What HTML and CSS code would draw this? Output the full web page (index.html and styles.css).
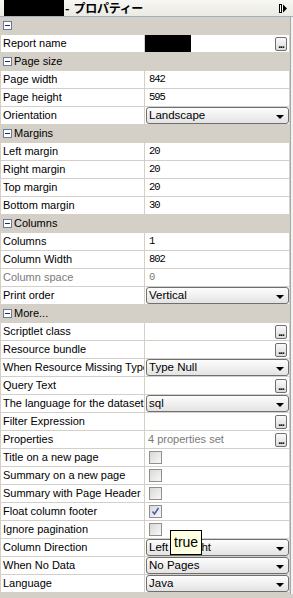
FILE: index.html
```html
<!DOCTYPE html>
<html lang="ja">
<head>
  <meta charset="UTF-8">
  <title>プロパティー</title>
  <link rel="stylesheet" href="styles.css">
</head>
<body>

  <div class="fenetre">

    <!-- barre de titre -->
    <div class="titre">
      <span class="masque"></span>
      <span class="titre-texte">- プロパティー</span>
      <svg class="epingle" width="8" height="9" viewBox="0 0 8 9">
        <rect x="0.5" y="0.5" width="2" height="8" fill="none" stroke="#000"/>
        <rect x="1" y="1" width="1" height="7" fill="#fff"/>
        <path d="M4 0.5 L8 4.5 L4 8.5 Z" fill="#000"/>
      </svg>
    </div>

    <div class="corps">
      <div class="grille">

        <div class="categorie"><span class="plier"></span></div>
        <div class="ligne">
          <div class="nom">Report name</div>
          <div class="valeur"><span class="masque petit"></span><span class="bouton">...</span></div>
        </div>

        <div class="categorie"><span class="plier"></span>Page size</div>
        <div class="ligne"><div class="nom">Page width</div><div class="valeur num">842</div></div>
        <div class="ligne"><div class="nom">Page height</div><div class="valeur num">595</div></div>
        <div class="ligne">
          <div class="nom">Orientation</div>
          <div class="valeur"><div class="combo">Landscape<span class="fleche"></span></div></div>
        </div>

        <div class="categorie"><span class="plier"></span>Margins</div>
        <div class="ligne"><div class="nom">Left margin</div><div class="valeur num">20</div></div>
        <div class="ligne"><div class="nom">Right margin</div><div class="valeur num">20</div></div>
        <div class="ligne"><div class="nom">Top margin</div><div class="valeur num">20</div></div>
        <div class="ligne"><div class="nom">Bottom margin</div><div class="valeur num">30</div></div>

        <div class="categorie"><span class="plier"></span>Columns</div>
        <div class="ligne"><div class="nom">Columns</div><div class="valeur num">1</div></div>
        <div class="ligne"><div class="nom">Column Width</div><div class="valeur num">802</div></div>
        <div class="ligne"><div class="nom gris">Column space</div><div class="valeur num gris">0</div></div>
        <div class="ligne">
          <div class="nom">Print order</div>
          <div class="valeur"><div class="combo">Vertical<span class="fleche"></span></div></div>
        </div>

        <div class="categorie"><span class="plier"></span>More...</div>
        <div class="ligne"><div class="nom">Scriptlet class</div><div class="valeur"><span class="bouton">...</span></div></div>
        <div class="ligne"><div class="nom">Resource bundle</div><div class="valeur"><span class="bouton">...</span></div></div>
        <div class="ligne">
          <div class="nom">When Resource Missing Type</div>
          <div class="valeur"><div class="combo">Type Null<span class="fleche"></span></div></div>
        </div>
        <div class="ligne"><div class="nom">Query Text</div><div class="valeur"><span class="bouton">...</span></div></div>
        <div class="ligne">
          <div class="nom">The language for the dataset</div>
          <div class="valeur"><div class="combo">sql<span class="fleche"></span></div></div>
        </div>
        <div class="ligne"><div class="nom">Filter Expression</div><div class="valeur"><span class="bouton">...</span></div></div>
        <div class="ligne">
          <div class="nom">Properties</div>
          <div class="valeur"><span class="gris texte">4 properties set</span><span class="bouton">...</span></div>
        </div>
        <div class="ligne"><div class="nom">Title on a new page</div><div class="valeur"><span class="case"></span></div></div>
        <div class="ligne"><div class="nom">Summary on a new page</div><div class="valeur"><span class="case"></span></div></div>
        <div class="ligne"><div class="nom">Summary with Page Header and Footer</div><div class="valeur"><span class="case"></span></div></div>
        <div class="ligne">
          <div class="nom">Float column footer</div>
          <div class="valeur">
            <span class="case">
              <svg width="11" height="11" viewBox="0 0 11 11"><path d="M2.5 5.5 L4.5 8 L8.5 2" fill="none" stroke="#4b5ea8" stroke-width="1.6"/></svg>
            </span>
          </div>
        </div>
        <div class="ligne"><div class="nom">Ignore pagination</div><div class="valeur"><span class="case"></span></div></div>
        <div class="ligne">
          <div class="nom">Column Direction</div>
          <div class="valeur"><div class="combo">Left to Right<span class="fleche"></span></div></div>
        </div>
        <div class="ligne">
          <div class="nom">When No Data</div>
          <div class="valeur"><div class="combo">No Pages<span class="fleche"></span></div></div>
        </div>
        <div class="ligne">
          <div class="nom">Language</div>
          <div class="valeur"><div class="combo">Java<span class="fleche"></span></div></div>
        </div>

      </div>
      <div class="defil"></div>
    </div>

    <!-- info-bulle -->
    <div class="bulle">true</div>
  </div>

</body>
</html>
```

FILE: styles.css
```css
body {
  margin: 0;
  padding: 0;
  background-color: #d4d0c8;
  font-family: "Liberation Sans", Arial, sans-serif;
  font-size: 11px;
  color: #000;
}

.fenetre {
  position: relative;
  width: 293px;
  height: 598px;
  overflow: hidden;
}

.titre {
  height: 16px;
  border-bottom: 1px solid #9fb0c6;
  background: linear-gradient(#f7f7f3, #ebeae4);
  display: flex;
  align-items: center;
  padding-left: 4px;
}

.masque {
  display: inline-block;
  width: 60px;
  height: 16px;
  background-color: #000;
}

.masque.petit {
  width: 47px;
  height: 17px;
  margin-left: -1px;
}

.titre-texte {
  margin-left: 1px;
  font-family: "Noto Sans CJK JP", sans-serif;
  font-weight: bold;
  font-size: 12px;
  line-height: 16px;
  letter-spacing: -0.3px;
  word-spacing: 2px;
}

.epingle {
  margin-left: auto;
  margin-right: 6px;
}

.corps {
  display: flex;
}

.grille {
  width: 288px;
  padding-left: 1px;
  padding-bottom: 1px;
}

.categorie {
  height: 17px;
  margin-bottom: 1px;
  display: flex;
  align-items: center;
  padding-left: 2px;
  line-height: 17px;
}

.plier {
  width: 7px;
  height: 7px;
  border: 1px solid #6b7a9a;
  background: #fff;
  margin-right: 2px;
  position: relative;
}

.plier::after {
  content: "";
  position: absolute;
  left: 1px;
  top: 3px;
  width: 5px;
  height: 1px;
  background-color: #1f2f5a;
}

.ligne {
  display: grid;
  grid-template-columns: 143px 144px;
  column-gap: 1px;
  margin-bottom: 1px;
}

.nom, .valeur {
  height: 17px;
  line-height: 17px;
  background-color: #fff;
  white-space: nowrap;
  overflow: hidden;
}

.nom {
  padding-left: 2px;
}

.valeur {
  display: flex;
  align-items: center;
}

.num {
  padding-left: 4px;
  font-family: "Liberation Mono", monospace;
  font-size: 10.5px;
  letter-spacing: -1px;
}

.gris {
  color: #7a7a7a;
}

.texte {
  padding-left: 3px;
}

.bouton {
  margin-left: auto;
  margin-right: 2px;
  width: 10px;
  height: 12px;
  border: 1px solid #6f6f6f;
  border-radius: 2px;
  background: linear-gradient(#fafafa, #dcdcdc);
  font-size: 10px;
  font-weight: bold;
  line-height: 13px;
  text-align: center;
  letter-spacing: -1px;
  color: #000;
  overflow: hidden;
}

.combo {
  position: relative;
  margin-left: 1px;
  width: 139px;
  height: 15px;
  line-height: 15px;
  padding-left: 2px;
  border: 1px solid #6f6f6f;
  border-radius: 3px;
  background: linear-gradient(#fdfdfd, #e3e3e3);
  font-size: 11.5px;
}

.fleche {
  position: absolute;
  right: 4px;
  top: 7px;
  border-left: 4px solid transparent;
  border-right: 4px solid transparent;
  border-top: 4px solid #000;
}

.case {
  margin-left: 4px;
  width: 11px;
  height: 11px;
  border: 1px solid #8f8f8f;
  background: linear-gradient(135deg, #d8d8d8, #f8f8f8);
  display: flex;
}

.defil {
  width: 3px;
  margin-left: 1px;
  border-left: 1px solid #a7a7a7;
  background-color: #f2f2f2;
}

.bulle {
  position: absolute;
  left: 170px;
  top: 530px;
  padding: 2px 3px 3px 3px;
  border: 1px solid #000;
  background-color: #ffffe1;
  font-size: 14px;
  line-height: 18px;
}
```
